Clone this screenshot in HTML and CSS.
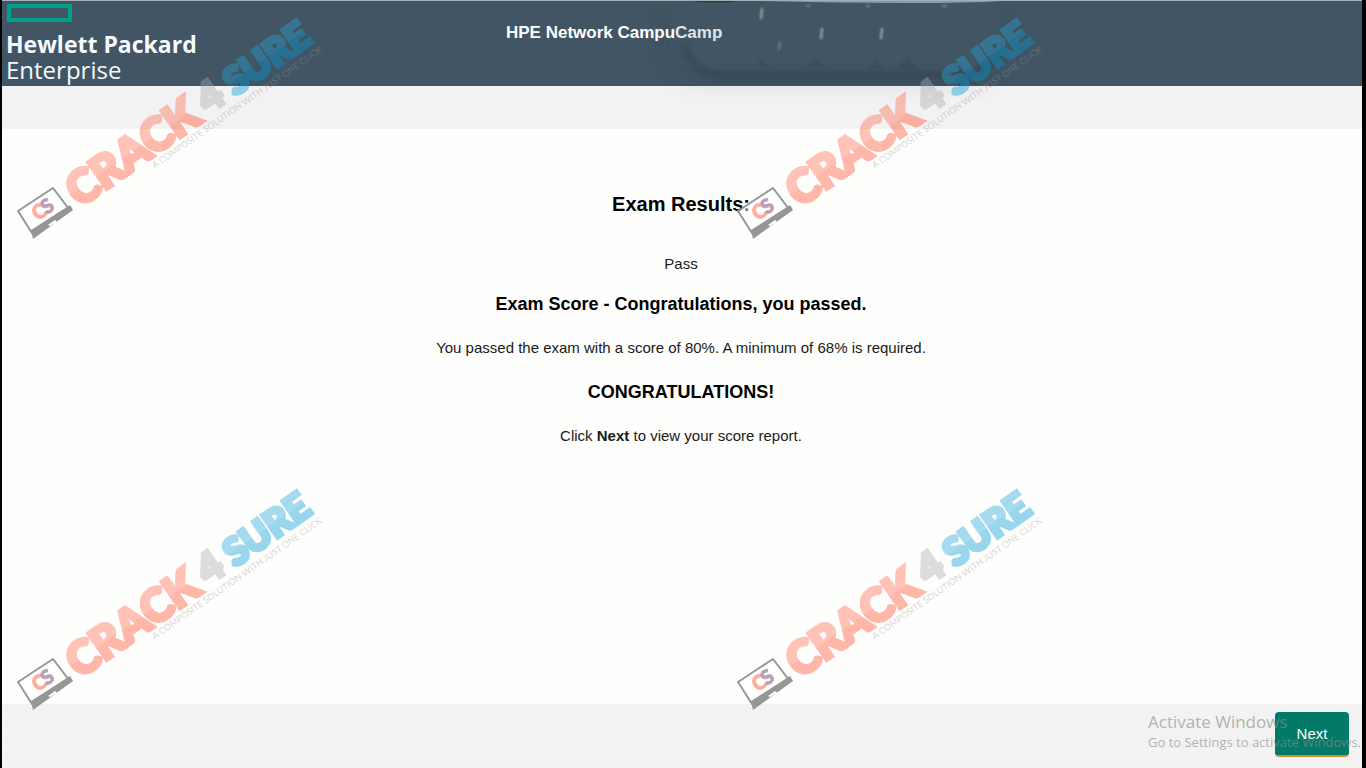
FILE: index.html
```
<!DOCTYPE html>
<html lang="en">
<head>
  <meta charset="UTF-8">
  <meta name="viewport" content="width=device-width, initial-scale=1.0">
  <title>Exam Results</title>
  <link rel="stylesheet" href="styles.css">
</head>
<body>
  <div class="page">
    <header class="header">
      <div class="logo">
        <svg class="logo-mark" width="66" height="19" viewBox="0 0 66 19">
          <rect x="3" y="3" width="61" height="14" fill="none" stroke="#01a08a" stroke-width="4"/>
        </svg>
        <span class="logo-name">Hewlett Packard</span>
        <span class="logo-sub">Enterprise</span>
      </div>
      <div class="exam-title">HPE Network Campu<span class="title-end">Camp</span></div>
      <div class="smudge">
        <svg width="370" height="86" viewBox="0 0 370 86">
          <defs>
            <filter id="soft" x="-10%" y="-50%" width="120%" height="200%"><feGaussianBlur stdDeviation="3"/></filter>
            <filter id="softer"><feGaussianBlur stdDeviation="1"/></filter>
          </defs>
          <path d="M14 44q8 30 38 30h238q26 0 40-24" fill="none" stroke="#33414f" stroke-width="7" opacity=".6" filter="url(#soft)"/>
          <path d="M86 64l6-5l8 9M136 66l10-9l10 10M198 68l8-9l8 8M226 68l12-12l10 12M278 68l9-6l10 6" fill="#33465a" opacity=".5" filter="url(#softer)"/>
          <path d="M18 0h50q-18 3-50 0z" fill="#1d2d2e" opacity=".6"/>
          <path d="M90 0h240q-25 2-95 2t-145-2z" fill="#b9cbe0" opacity=".6"/>
          <g stroke="#a0b0bb" stroke-width="2" filter="url(#softer)">
            <path d="M92 7l-1 11M152 27l-1 11M212 27l-1 11"/>
            <path d="M110 41l-1 8M136 5h4M196 5h4M272 5h5" opacity=".5"/>
          </g>
        </svg>
      </div>
    </header>
    <div class="subbar"></div>

    <main class="content">
      <h1>Exam Results:</h1>
      <p class="status">Pass</p>
      <h2>Exam Score - Congratulations, you passed.</h2>
      <p>You passed the exam with a score of 80%. A minimum of 68% is required.</p>
      <h2>CONGRATULATIONS!</h2>
      <p>Click <strong>Next</strong> to view your score report.</p>
    </main>

    <footer class="footer">
      <button type="button" class="next-button">Next</button>
    </footer>
  </div>

  <div class="activate">
    <div class="activate-title">Activate Windows</div>
    <div class="activate-text">Go to Settings to activate Windows.</div>
  </div>

  <svg class="watermarks" width="100%" height="100%">
    <defs>
      <linearGradient id="red" x1="0" y1="0" x2="0" y2="1">
        <stop offset=".52" stop-color="#ff6a4d"/>
        <stop offset=".52" stop-color="#ff4e2b"/>
      </linearGradient>
      <linearGradient id="blue" x1="0" y1="0" x2="0" y2="1">
        <stop offset=".52" stop-color="#24a6d8"/>
        <stop offset=".52" stop-color="#009bd5"/>
      </linearGradient>
      <g id="mark">
        <path d="M18 211L53 188L69 209L32 233Z" fill="#fff" fill-opacity=".5" stroke="#969696" stroke-width="2" stroke-linejoin="round"/>
        <path d="M31 230L70 205L73 210L33 239Z" fill="#969696"/>
        <path d="M48 225l7-5l2 2l-7 4z" fill="#fff"/>
        <g transform="rotate(-35)">
          <g class="wm-cs">
            <text x="-96" y="203" fill="#ff4e2b" stroke="#ff4e2b">C</text>
            <text x="-85" y="203" fill="#6b2d6b" stroke="#6b2d6b">S</text>
          </g>
          <text class="wm-crack" x="-54" y="216" fill="url(#red)" stroke="url(#red)">CRACK</text>
          <text class="wm-four" x="105" y="213">4</text>
          <text class="wm-sure" x="137" y="214" fill="url(#blue)" stroke="url(#blue)">SURE</text>
          <text class="wm-tag" x="30" y="227">A COMPOSITE SOLUTION WITH JUST ONE CLICK</text>
        </g>
      </g>
    </defs>
    <use href="#mark"/>
    <use href="#mark" x="720"/>
    <use href="#mark" y="471"/>
    <use href="#mark" x="720" y="471"/>
  </svg>
</body>
</html>
```

FILE: styles.css
```
* {
  box-sizing: border-box;
}

body {
  margin: 0;
  background-color: #000;
  font-family: "Liberation Sans", Arial, sans-serif;
  color: #1a1a1a;
}

.page {
  display: flex;
  flex-direction: column;
  min-height: 100vh;
  margin: 0 4px 0 2px;
  background-color: #fefefd;
}

.header {
  position: relative;
  display: flex;
  align-items: flex-start;
  height: 86px;
  padding: 2px 4px 0;
  border-top: 1px solid #a4b4b8;
  background-color: #415564;
  color: #fff;
}

.logo {
  display: flex;
  flex-direction: column;
  width: 500px;
  font-family: "Open Sans", sans-serif;
  color: #f4faff;
}

.logo-mark {
  margin-bottom: 10px;
}

.logo-name {
  font-size: 23px;
  font-weight: 700;
  line-height: 25px;
}

.logo-sub {
  font-size: 24px;
  line-height: 25px;
}

.exam-title {
  padding-top: 19px;
  font-size: 17px;
  font-weight: bold;
  line-height: 22px;
}

.title-end {
  color: #dfe6ea;
}

/* faded popup over the header */
.smudge {
  position: absolute;
  top: 0;
  left: 668px;
  width: 330px;
  height: 70px;
  border-radius: 0 0 30px 30px;
  box-shadow: 0 10px 28px rgba(30, 35, 60, 0.1);
}

.subbar {
  height: 43px;
  background-color: #f2f2f2;
}

.content {
  flex: 1;
  padding: 63px 2px 0 0;
  text-align: center;
}

h1,
h2,
p {
  margin: 0 0 22px;
}

h1 {
  margin-bottom: 38px;
  font-size: 20px;
  line-height: 24px;
  color: #000;
}

h2 {
  font-size: 18px;
  line-height: 24px;
  color: #000;
}

p {
  font-size: 15px;
  line-height: 20px;
}

.status {
  margin-bottom: 18px;
}

.footer {
  display: flex;
  justify-content: flex-end;
  height: 64px;
  padding: 8px 13px;
  background-color: #f2f2f2;
  background-image:
    repeating-linear-gradient(90deg, rgba(255, 255, 255, 0.15) 0 2px, transparent 2px 17px),
    repeating-linear-gradient(0deg, rgba(255, 255, 255, 0.15) 0 2px, transparent 2px 17px);
}

.next-button {
  width: 74px;
  height: 45px;
  padding: 0;
  border: none;
  border-bottom: 2px solid #d98a35;
  border-radius: 4px;
  background-color: #017a67;
  color: #fff;
  font-family: inherit;
  font-size: 15px;
  cursor: pointer;
}

.activate {
  position: absolute;
  right: 5px;
  bottom: 17px;
  font-family: "Open Sans", sans-serif;
  color: rgba(140, 140, 140, 0.65);
  white-space: nowrap;
  pointer-events: none;
}

.activate-title {
  font-size: 17px;
  line-height: 22px;
}

.activate-text {
  font-size: 13px;
  line-height: 18px;
}

.watermarks {
  position: absolute;
  top: 0;
  left: 0;
  pointer-events: none;
}

.wm-crack,
.wm-four,
.wm-sure {
  font-family: Lato, sans-serif;
  font-weight: 900;
  stroke-width: 4px;
  opacity: 0.4;
}

.wm-crack {
  font-size: 45px;
}

.wm-four {
  font-size: 40px;
  fill: #aaa;
  stroke: #aaa;
}

.wm-sure {
  font-size: 38px;
}

.wm-tag {
  font-family: Lato, sans-serif;
  font-size: 9px;
  fill: rgba(150, 150, 150, 0.4);
}

.wm-cs {
  font-family: Lato, sans-serif;
  font-size: 20px;
  font-weight: 900;
  stroke-width: 1px;
  opacity: 0.45;
}
```
